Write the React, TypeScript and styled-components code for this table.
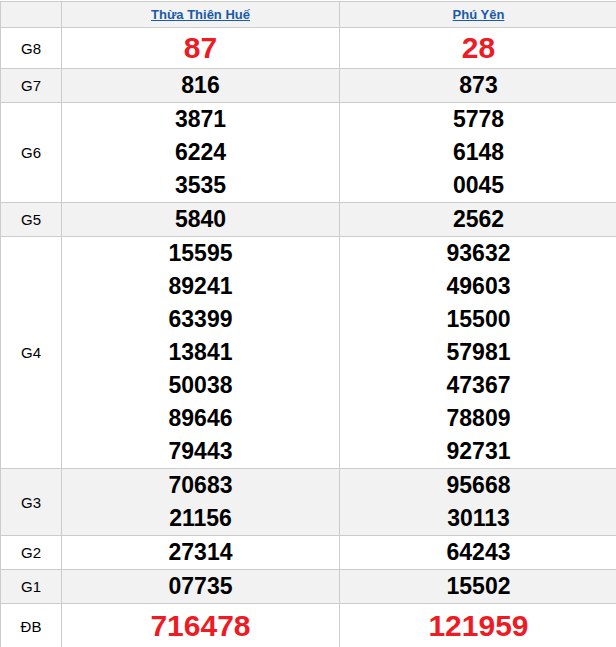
import React from "react";
import styled, { createGlobalStyle } from "styled-components";

type Prize = {
  label: string;
  hue: string[];
  phuYen: string[];
  special?: boolean;
  tall?: number;
};

const prizes: Prize[] = [
  { label: "G8", hue: ["87"], phuYen: ["28"], special: true, tall: 40 },
  { label: "G7", hue: ["816"], phuYen: ["873"] },
  { label: "G6", hue: ["3871", "6224", "3535"], phuYen: ["5778", "6148", "0045"] },
  { label: "G5", hue: ["5840"], phuYen: ["2562"] },
  {
    label: "G4",
    hue: ["15595", "89241", "63399", "13841", "50038", "89646", "79443"],
    phuYen: ["93632", "49603", "15500", "57981", "47367", "78809", "92731"],
  },
  { label: "G3", hue: ["70683", "21156"], phuYen: ["95668", "30113"] },
  { label: "G2", hue: ["27314"], phuYen: ["64243"] },
  { label: "G1", hue: ["07735"], phuYen: ["15502"] },
  { label: "ĐB", hue: ["716478"], phuYen: ["121959"], special: true, tall: 44 },
];

const App: React.FC = () => {
  return (
    <StyledPage>
      <GlobalStyle />
      <StyledTable>
        <StyledHeadCell $shade />
        <StyledHeadCell $shade>
          <StyledProvince href="#">Thừa Thiên Huế</StyledProvince>
        </StyledHeadCell>
        <StyledHeadCell $shade>
          <StyledProvince href="#">Phú Yên</StyledProvince>
        </StyledHeadCell>
        {prizes.map((p, i) => {
          const shade = i % 2 === 1;
          return (
            <React.Fragment key={p.label}>
              <StyledLabel $shade={shade}>{p.label}</StyledLabel>
              {[p.hue, p.phuYen].map((list, c) => (
                <StyledNumbers key={c} $shade={shade}>
                  {list.map((n) => (
                    <StyledNumber key={n} $special={p.special} $tall={p.tall}>
                      {n}
                    </StyledNumber>
                  ))}
                </StyledNumbers>
              ))}
            </React.Fragment>
          );
        })}
      </StyledTable>
    </StyledPage>
  );
};

//Styled-Components
const GlobalStyle = createGlobalStyle`
  html, body {
    margin: 0;
    padding: 0;
    background: #ffffff;
    overflow: hidden;
  }
  body {
    font-family: "Liberation Sans", Arial, sans-serif;
  }
`;

const StyledPage = styled.div`
  padding-top: 1px;
  width: 616px;
  overflow: hidden;
`;

const StyledTable = styled.div`
  display: grid;
  grid-template-columns: 61px 278px 278px;
  width: 618px;
  border-top: 1px solid #cccccc;
  border-left: 1px solid #cccccc;
`;

const StyledCell = styled.div<{ $shade?: boolean }>`
  background: ${(p) => (p.$shade ? "#f2f2f2" : "#ffffff")};
  border-right: 1px solid #cccccc;
  border-bottom: 1px solid #cccccc;
  display: flex;
  flex-direction: column;
  align-items: center;
  justify-content: center;
`;

const StyledHeadCell = styled(StyledCell)`
  height: 25px;
`;

const StyledProvince = styled.a`
  font-size: 13px;
  font-weight: bold;
  color: #1a5aa8;
  text-decoration: underline;
  line-height: 16px;
`;

const StyledLabel = styled(StyledCell)`
  font-size: 15px;
  color: #000000;
`;

const StyledNumbers = styled(StyledCell)``;

const StyledNumber = styled.div<{ $special?: boolean; $tall?: number }>`
  font-weight: bold;
  font-size: ${(p) => (p.$special ? "30px" : "23px")};
  color: ${(p) => (p.$special ? "#ed1c24" : "#000000")};
  line-height: ${(p) => (p.$tall ? `${p.$tall}px` : "33px")};
  text-align: center;
`;

export default App;
